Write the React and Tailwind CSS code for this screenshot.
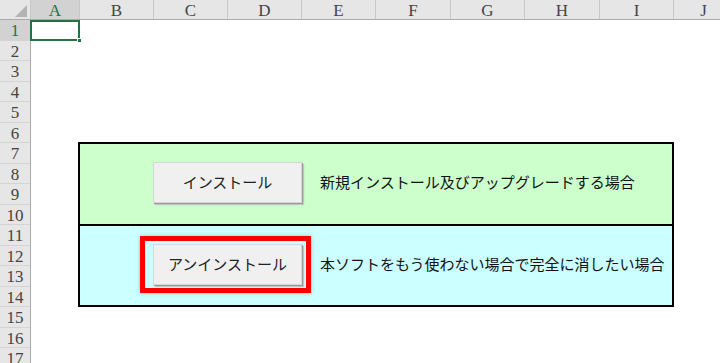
const cols = [
  { name: "A", w: "w-[49px]" },
  { name: "B", w: "w-[74px]" },
  { name: "C", w: "w-[74px]" },
  { name: "D", w: "w-[74px]" },
  { name: "E", w: "w-[74px]" },
  { name: "F", w: "w-[75px]" },
  { name: "G", w: "w-[74px]" },
  { name: "H", w: "w-[75px]" },
  { name: "I", w: "w-[74px]" },
  { name: "J", w: "w-[60px]" },
];

const rows = Array.from({ length: 17 }, (_, i) => i + 1);

const jp = { fontFamily: '"Noto Sans CJK JP", "Noto Sans", sans-serif' };

const SheetButton = ({ label }) => (
  <div
    className="flex h-[41px] w-[149px] shrink-0 items-center justify-center border border-[#d6d6d6] bg-[#f0f0f0] text-[15px] text-[#222] shadow-[1px_1px_0_#9a9a9a,2px_2px_1px_#c4c4c4]"
    style={jp}
  >
    {label}
  </div>
);

export default function App() {
  return (
    <div
      className="relative h-[363px] w-[720px] overflow-hidden bg-white"
      style={{ fontFamily: '"Liberation Serif", "DejaVu Serif", serif' }}
    >
      {/* column header */}
      <div className="flex h-[20px] border-b border-[#ababab] bg-[#e6e6e6] text-[17px] text-[#444]">
        <div className="relative w-[31px] shrink-0 border-r border-[#c8c8c8]">
          <svg className="absolute bottom-[2px] right-[3px]" width="12" height="12" viewBox="0 0 12 12">
            <polygon points="12,0 12,12 0,12" fill="#b4b4b4" />
          </svg>
        </div>
        {cols.map((c) => (
          <div
            key={c.name}
            className={`${c.w} flex shrink-0 items-center justify-center border-r border-[#c8c8c8] pt-[2px] leading-none ${
              c.name === "A" ? "bg-[#d2d2d2] text-[#217346]" : ""
            }`}
          >
            {c.name}
          </div>
        ))}
      </div>

      <div className="flex">
        {/* row header */}
        <div className="flex w-[31px] shrink-0 flex-col border-r border-[#ababab] bg-[#e6e6e6] text-[17px] text-[#444]">
          {rows.map((r) => (
            <div
              key={r}
              className={`flex items-center justify-center border-b border-[#d4d4d4] pt-[1px] leading-none ${
                r % 2 ? "h-[21px]" : "h-[20px]"
              } ${r === 1 ? "bg-[#d2d2d2] text-[#217346]" : ""}`}
            >
              {r}
            </div>
          ))}
        </div>

        {/* cells */}
        <div className="pl-[47px] pt-[122px]">
          <div className="w-[596px] border-2 border-black">
            <div className="flex h-[82px] items-start border-b-2 border-black bg-[#ccffcc] pl-[73px] pt-[18px]">
              <SheetButton label="インストール" />
              <div className="ml-[18px] flex h-[41px] items-center text-[15px] text-[#111]" style={jp}>
                新規インストール及びアップグレードする場合
              </div>
            </div>
            <div className="flex h-[79px] items-start bg-[#ccffff] pl-[73px] pt-[18px]">
              <SheetButton label="アンインストール" />
              <div className="ml-[18px] flex h-[41px] items-center whitespace-nowrap text-[15px] text-[#111]" style={jp}>
                本ソフトをもう使わない場合で完全に消したい場合
              </div>
            </div>
          </div>
        </div>
      </div>

      {/* active cell A1 */}
      <div className="absolute left-[30px] top-[20px] h-[21px] w-[50px] border-2 border-[#217346]" />
      <div className="absolute left-[77px] top-[38px] h-[5px] w-[5px] border border-white bg-[#217346]" />

      {/* red highlight */}
      <div className="absolute left-[140px] top-[236px] h-[57px] w-[171px] border-[5px] border-[#ff0000] shadow-[0_0_4px_rgba(0,0,0,0.25)]" />
    </div>
  );
}
